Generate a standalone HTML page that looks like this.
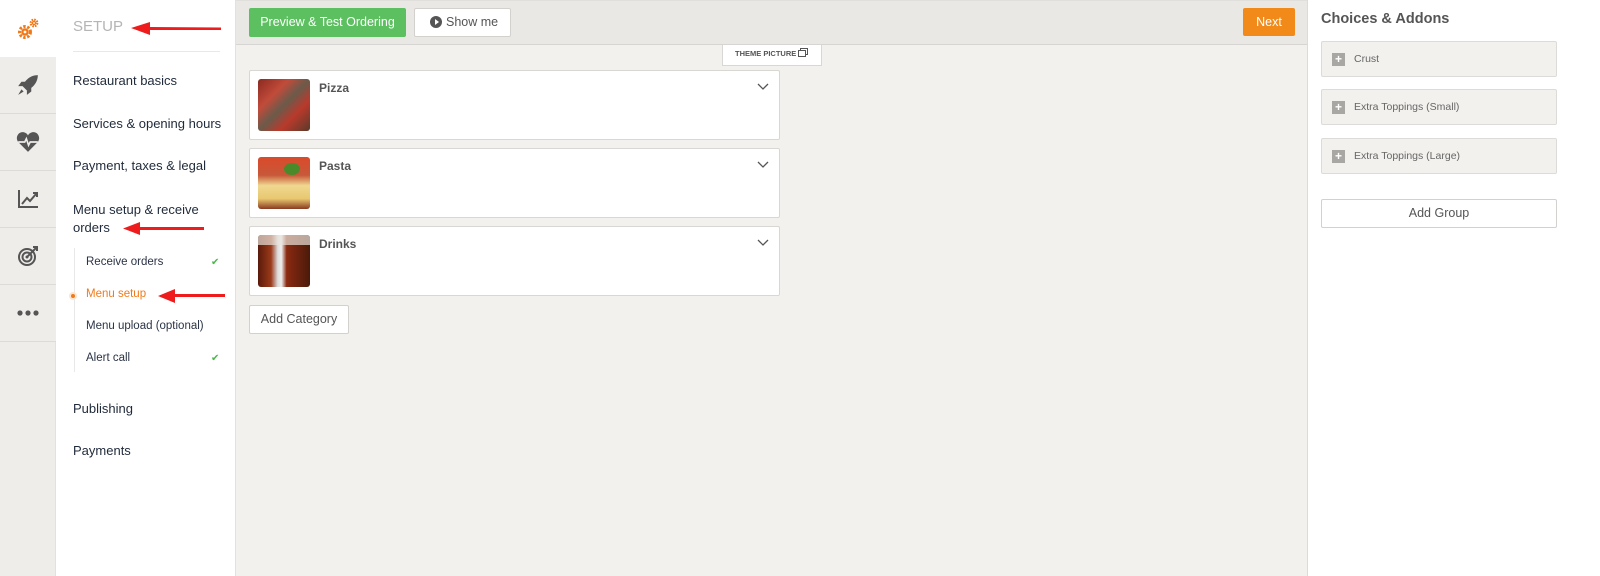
<!DOCTYPE html>
<html><head><meta charset="utf-8"><style>
*{box-sizing:border-box;margin:0;padding:0}
body{width:1600px;height:576px;overflow:hidden;font-family:"Liberation Sans",sans-serif;background:#fff;position:relative}
.abs{position:absolute}
.ic{position:absolute;left:0;width:56px;height:57px;background:#eeedea;border-bottom:1px solid #dcdbd8;display:flex;align-items:center;justify-content:center}
.nav{font-size:13px;color:#1f2a3a;position:absolute;left:73px}
.sub{font-size:11.5px;color:#2a3345;position:absolute;left:86px}
.chk{position:absolute;left:211px;color:#4cb84c;font-size:10px}
.card{position:absolute;left:249px;width:531px;height:70px;background:#fff;border:1px solid #d8d7d4;border-radius:2px}
.card .th{position:absolute;left:8px;top:8px;width:52px;height:52px;border-radius:3px;overflow:hidden}
.card .t{position:absolute;left:69px;top:10px;font-size:12px;font-weight:bold;color:#555}
.card svg{position:absolute;right:10px;top:12px}
.grp{position:absolute;left:1321px;width:236px;height:36px;background:#f2f1ee;border:1px solid #dcdbd8;border-radius:2px;font-size:10.5px;color:#666}
.grp .p{position:absolute;left:10px;top:11px;width:13px;height:13px;background:#a8a7a4;color:#fff;font-size:12px;line-height:13px;text-align:center;font-weight:bold}
.grp .l{position:absolute;left:32px;top:11px}
</style></head><body>
<div class="abs" style="left:0;top:0;width:56px;height:576px;background:#eeedea;border-right:1px solid #e2e1de"></div>
<div class="abs" style="left:0;top:0;width:56px;height:57px;background:#fff;display:flex;align-items:center;justify-content:center">
<svg width="24" height="22" viewBox="0 0 24 22"><circle cx="9" cy="14" r="5.5" fill="none" stroke="#f07a1a" stroke-width="3" stroke-dasharray="2.4 1.6"/><circle cx="9" cy="14" r="3.8" fill="#f07a1a"/><circle cx="9" cy="14" r="1.4" fill="#fff"/><circle cx="18" cy="5" r="3.3" fill="none" stroke="#f07a1a" stroke-width="2.2" stroke-dasharray="1.6 1"/><circle cx="18" cy="5" r="2.2" fill="#f07a1a"/><circle cx="18" cy="5" r="0.9" fill="#fff"/></svg></div>
<div class="ic" style="top:57px"><svg width="24" height="24" viewBox="0 0 22 22"><path d="M20 2 C13 2 8 7 6 12 L10 16 C15 14 20 9 20 2Z" fill="#555"/><path d="M6 12 L2 12 L5 8 L9 8Z M10 16 L10 20 L14 17 L14 13Z" fill="#555"/><path d="M5 15 L2 20 L7 17Z" fill="#555"/></svg></div>
<div class="ic" style="top:114px"><svg width="24" height="22" viewBox="0 0 22 20"><path d="M11 19 L2 10 C-1 6 2 1 6 1 C8 1 10 2 11 4 C12 2 14 1 16 1 C20 1 23 6 20 10Z" fill="#555"/><path d="M2 10 H8 L9.5 7 L11.5 13 L13 10 H20" stroke="#eeedea" stroke-width="1.5" fill="none"/></svg></div>
<div class="ic" style="top:171px"><svg width="22" height="20" viewBox="0 0 22 20"><path d="M2 1 V18 H21" stroke="#555" stroke-width="2" fill="none"/><path d="M5 15 L10 9 L13 12 L19 5" stroke="#555" stroke-width="2" fill="none"/><path d="M16 4 H20 V8" stroke="#555" stroke-width="2" fill="none"/></svg></div>
<div class="ic" style="top:228px"><svg width="22" height="22" viewBox="0 0 22 22"><circle cx="10" cy="12" r="8" stroke="#555" stroke-width="2" fill="none"/><circle cx="10" cy="12" r="4.5" stroke="#555" stroke-width="2" fill="none"/><circle cx="10" cy="12" r="1.5" fill="#555"/><path d="M10 12 L19 3" stroke="#555" stroke-width="2"/><path d="M16 2 L20 2 L20 6" stroke="#555" stroke-width="2" fill="none"/></svg></div>
<div class="ic" style="top:285px"><svg width="22" height="6"><circle cx="3" cy="3" r="2.6" fill="#555"/><circle cx="11" cy="3" r="2.6" fill="#555"/><circle cx="19" cy="3" r="2.6" fill="#555"/></svg></div>
<div class="abs" style="left:56px;top:0;width:180px;height:576px;background:#fff;border-right:1px solid #e2e1de"></div>
<div class="abs" style="left:73px;top:18px;font-size:15px;color:#b5b5b5">SETUP</div>
<div class="abs" style="left:73px;top:51px;width:147px;height:1px;background:#e8e8e8"></div>
<div class="nav" style="top:73px">Restaurant basics</div>
<div class="nav" style="top:116px">Services &amp; opening hours</div>
<div class="nav" style="top:158px">Payment, taxes &amp; legal</div>
<div class="nav" style="top:201px;line-height:18px">Menu setup &amp; receive<br>orders</div>
<div class="abs" style="left:74px;top:248px;width:1px;height:124px;background:#e8e8e8"></div>
<div class="sub" style="top:256px">Receive orders</div><div class="chk" style="top:257px">✔</div>
<div class="abs" style="left:69px;top:292px;width:8px;height:8px;border-radius:50%;background:#fde5d2"></div>
<div class="abs" style="left:71px;top:294px;width:4px;height:4px;border-radius:50%;background:#f07a1a"></div>
<div class="sub" style="top:288px;color:#f07a1a">Menu setup</div>
<div class="sub" style="top:320px">Menu upload (optional)</div>
<div class="sub" style="top:352px">Alert call</div><div class="chk" style="top:353px">✔</div>
<div class="nav" style="top:401px">Publishing</div>
<div class="nav" style="top:443px">Payments</div>
<svg class="abs" style="left:0;top:0" width="240" height="320">
<g fill="#ee1c1c"><path d="M221 27.5 L150 27 L150 22 L131 28 L150 35 L150 30 L221 30Z"/><path d="M204 227 L140 227 L140 222 L123 228.5 L140 235 L140 230 L204 230Z"/><path d="M225 294 L175 294 L175 289 L158 296 L175 303 L175 297 L225 297Z"/></g></svg>
<div class="abs" style="left:236px;top:0;width:1072px;height:576px;background:#f2f1ee"></div>
<div class="abs" style="left:236px;top:0;width:1072px;height:45px;background:#e9e8e5;border-bottom:1px solid #d6d5d2;border-top:1px solid #e0dfdc"></div>
<div class="abs" style="left:249px;top:8px;width:157px;height:29px;background:#5cc060;border-radius:2px;color:#fff;font-size:12.5px;line-height:29px;text-align:center">Preview &amp; Test Ordering</div>
<div class="abs" style="left:414px;top:8px;width:97px;height:29px;background:#fff;border:1px solid #d2d1ce;border-radius:2px;color:#555;font-size:12.5px;line-height:27px;padding-left:15px"><span style="display:inline-block;width:12px;height:12px;border-radius:50%;background:#555;vertical-align:-2px;position:relative;margin-right:4px"><span style="position:absolute;left:4.5px;top:3px;border-left:4px solid #fff;border-top:3px solid transparent;border-bottom:3px solid transparent"></span></span>Show me</div>
<div class="abs" style="left:1243px;top:8px;width:52px;height:28px;background:#f28a1a;border-radius:2px;color:#fff;font-size:12.5px;line-height:28px;text-align:center">Next</div>
<div class="abs" style="left:722px;top:45px;width:100px;height:21px;background:#fff;border:1px solid #d8d7d4;border-top:none;font-size:7.5px;font-weight:bold;color:#555;line-height:18px;padding-left:12px">THEME PICTURE <span style="display:inline-block;width:8px;height:7px;border:1px solid #555;vertical-align:-1px;box-shadow:2px -2px 0 -1px #fff,2px -2px 0 0 #555"></span></div>
<div class="card" style="top:70px"><div class="th" style="background:linear-gradient(135deg,#8a2a20,#c24b3a 30%,#6b5a4a 50%,#b93a2c 70%,#5a3a2a)"></div><div class="t">Pizza</div><svg width="12" height="8"><path d="M1 1 L6 6 L11 1" stroke="#555" stroke-width="1.3" fill="none"/></svg></div>
<div class="card" style="top:148px"><div class="th" style="background:linear-gradient(180deg,#d94a2a,#c8583a 35%,#f0d890 55%,#e8c870 80%,#8a3a20)"><div style="position:absolute;left:26px;top:6px;width:16px;height:12px;border-radius:50%;background:#4a8a2a"></div></div><div class="t">Pasta</div><svg width="12" height="8"><path d="M1 1 L6 6 L11 1" stroke="#555" stroke-width="1.3" fill="none"/></svg></div>
<div class="card" style="top:226px"><div class="th" style="background:linear-gradient(90deg,#5a1a0a,#9a3a1a 25%,#ddd 38%,#eee 45%,#8a2a10 55%,#4a1a0a);"><div style="position:absolute;left:0;top:0;width:52px;height:10px;background:#e8e2dc;opacity:.7"></div></div><div class="t">Drinks</div><svg width="12" height="8"><path d="M1 1 L6 6 L11 1" stroke="#555" stroke-width="1.3" fill="none"/></svg></div>
<div class="abs" style="left:249px;top:305px;width:100px;height:29px;background:#fff;border:1px solid #d2d1ce;border-radius:2px;color:#555;font-size:12.5px;line-height:27px;text-align:center">Add Category</div>
<div class="abs" style="left:1307px;top:0;width:1px;height:576px;background:#dcdbd8"></div>
<div class="abs" style="left:1321px;top:11px;font-size:14.5px;font-weight:bold;color:#555">Choices &amp; Addons</div>
<div class="grp" style="top:41px"><div class="p">+</div><div class="l">Crust</div></div>
<div class="grp" style="top:89px"><div class="p">+</div><div class="l">Extra Toppings (Small)</div></div>
<div class="grp" style="top:138px"><div class="p">+</div><div class="l">Extra Toppings (Large)</div></div>
<div class="abs" style="left:1321px;top:199px;width:236px;height:29px;background:#fff;border:1px solid #d2d1ce;border-radius:2px;color:#555;font-size:12.5px;line-height:27px;text-align:center">Add Group</div>
</body></html>
